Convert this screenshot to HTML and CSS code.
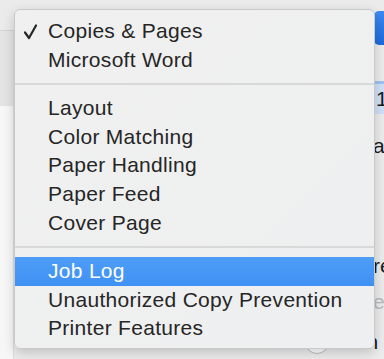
FILE: index.html
```html
<!DOCTYPE html>
<html lang="en">
<head>
    <meta charset="UTF-8">
    <title>Print</title>
    <link rel="stylesheet" href="styles.css">
</head>
<body>
    <div class="window">
        <div class="toolbar">
            <div class="toolbar-btn"></div>
        </div>
        <div class="content">
            <div class="sidebar">
                <div class="sidebar-top"></div>
            </div>
            <div class="main">
                <div class="field-row"><span class="field">1</span></div>
                <div class="label-row">at</div>
                <div class="label-row spaced">re</div>
                <div class="label-row dim">ec</div>
                <div class="radio-row">
                    <span class="radio"></span>
                    <span>Fron</span>
                </div>
            </div>
        </div>
    </div>

    <div class="menu">
        <div class="menu-item checked">
            <svg class="check" width="14" height="16" viewBox="0 0 14 16">
                <path d="M1 8.5 L5 14 L12 1.5" fill="none" stroke="#262626" stroke-width="2.2" stroke-linecap="round" stroke-linejoin="round"/>
            </svg>
            Copies &amp; Pages
        </div>
        <div class="menu-item">Microsoft Word</div>
        <div class="menu-sep"></div>
        <div class="menu-item">Layout</div>
        <div class="menu-item">Color Matching</div>
        <div class="menu-item">Paper Handling</div>
        <div class="menu-item">Paper Feed</div>
        <div class="menu-item">Cover Page</div>
        <div class="menu-sep"></div>
        <div class="menu-item active">Job Log</div>
        <div class="menu-item">Unauthorized Copy Prevention</div>
        <div class="menu-item">Printer Features</div>
    </div>
</body>
</html>
```

FILE: styles.css
```css
* {
    margin: 0;
    padding: 0;
    box-sizing: border-box;
}

body {
    font-family: 'Liberation Sans', Arial, sans-serif;
    width: 384px;
    height: 359px;
    overflow: hidden;
    position: relative;
    background: #ececec;
    color: #262626;
}

.window {
    display: flex;
    flex-direction: column;
    height: 100%;
}

.toolbar {
    height: 31px;
    background: #ebebeb;
    border-bottom: 1px solid #d4d4d4;
    display: flex;
    justify-content: flex-end;
    padding-top: 11px;
}

.toolbar-btn {
    width: 20px;
    height: 34px;
    margin-right: -10px;
    border-radius: 5px;
    background: linear-gradient(180deg, #3d8af3 0%, #1f68db 100%);
    position: relative;
    z-index: 1;
}

.content {
    flex: 1;
    display: flex;
}

.sidebar {
    width: 14px;
    background: #f7f7f7;
    border-right: 1px solid #dedede;
}

.sidebar-top {
    height: 75px;
    background: #e4e4e4;
}

.main {
    flex: 1;
    display: flex;
    flex-direction: column;
    align-items: flex-end;
    padding-top: 50px;
    font-size: 21px;
    color: #1a1a1a;
}

.field-row {
    width: 9px;
    overflow: hidden;
    border-top: 3px solid #9fc2ef;
    background: #cfe0f7;
    height: 33px;
    line-height: 30px;
}

.field {
    padding-left: 1px;
}

.label-row {
    width: 11px;
    overflow: hidden;
    white-space: nowrap;
    margin-top: 20px;
    line-height: 24px;
}

.label-row.spaced {
    margin-top: 96px;
}

.label-row.dim {
    color: #b8b8b8;
    margin-top: 12px;
}

.radio-row {
    margin-top: 16px;
    width: 79px;
    display: flex;
    align-items: center;
    gap: 6px;
    overflow: hidden;
    white-space: nowrap;
}

.radio {
    flex: none;
    width: 24px;
    height: 24px;
    border-radius: 50%;
    border: 1px solid #b9b9b9;
    background: #fff;
}

.menu {
    position: absolute;
    left: 14px;
    top: 9px;
    width: 361px;
    height: 340px;
    padding: 7px 0;
    background: linear-gradient(135deg, #f0f0f0 0%, #eeeff0 100%);
    border: 1px solid #c9c9c9;
    border-radius: 6px;
    box-shadow: 0 4px 12px rgba(0, 0, 0, 0.18);
    z-index: 5;
}

.menu-item {
    position: relative;
    height: 28.7px;
    line-height: 28.7px;
    padding-left: 33px;
    font-size: 21px;
    letter-spacing: 0.3px;
    color: #262626;
    white-space: nowrap;
}

.menu-item.active {
    background: linear-gradient(180deg, #4e9df8 0%, #3f91f3 100%);
    color: #fff;
}

.check {
    position: absolute;
    left: 9px;
    top: 7px;
}

.menu-sep {
    height: 19.5px;
    display: flex;
    align-items: center;
}

.menu-sep::before {
    content: '';
    flex: 1;
    height: 2px;
    background: #d9d9d9;
}
```
